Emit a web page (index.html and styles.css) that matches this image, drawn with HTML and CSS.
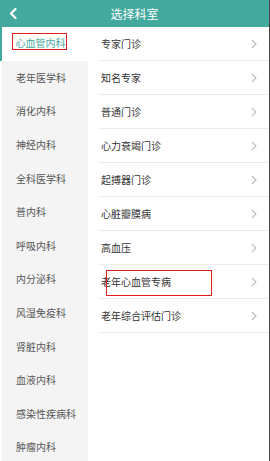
FILE: index.html
```html
<!DOCTYPE html>
<html lang="zh-CN">
<head>
    <meta charset="UTF-8">
    <meta name="viewport" content="width=device-width, initial-scale=1.0">
    <title>选择科室</title>
    <link rel="stylesheet" href="styles.css">
</head>
<body>

<div class="page">
    <header class="topbar">
        <span class="back">
            <svg width="8" height="11" viewBox="0 0 8 11"><path d="M6.5 1 L2 5.5 L6.5 10" fill="none" stroke="#fff" stroke-width="2.2" stroke-linecap="round" stroke-linejoin="round"/></svg>
        </span>
        <h1>选择科室</h1>
    </header>

    <div class="content">
        <ul class="dept-list">
            <li class="dept-item active"><span class="mark">心血管内科</span></li>
            <li class="dept-item">老年医学科</li>
            <li class="dept-item">消化内科</li>
            <li class="dept-item">神经内科</li>
            <li class="dept-item">全科医学科</li>
            <li class="dept-item">普内科</li>
            <li class="dept-item">呼吸内科</li>
            <li class="dept-item">内分泌科</li>
            <li class="dept-item">风湿免疫科</li>
            <li class="dept-item">肾脏内科</li>
            <li class="dept-item">血液内科</li>
            <li class="dept-item">感染性疾病科</li>
            <li class="dept-item">肿瘤内科</li>
        </ul>

        <ul class="clinic-list" id="clinicList">
            <!-- rows are added by the script below -->
        </ul>
    </div>
</div>

<script>
    var clinics = ['专家门诊', '知名专家', '普通门诊', '心力衰竭门诊', '起搏器门诊',
        '心脏瓣膜病', '高血压', '老年心血管专病', '老年综合评估门诊'];

    // Build the clinic rows on the right side
    function displayClinics() {
        var list = document.getElementById('clinicList');
        clinics.forEach(function(name, index) {
            var item = document.createElement('li');
            item.className = 'clinic-item';
            item.innerHTML = '<span>' + name + '</span>' +
                '<svg class="arrow" width="6" height="10" viewBox="0 0 6 10"><path d="M1 1 L5 5 L1 9" fill="none" stroke="#bdbdbd" stroke-width="1.1"/></svg>';
            if (index === 7) {
                item.innerHTML += '<span class="highlight"></span>';
            }
            list.appendChild(item);
        });
    }

    displayClinics();
</script>

</body>
</html>
```

FILE: styles.css
```css
body {
    margin: 0;
    padding: 0;
    background: #fff;
    font-family: "Noto Sans CJK SC", "Noto Sans", sans-serif;
}

.page {
    width: 270px;
    height: 461px;
    box-sizing: border-box;
    border-right: 1px solid #474747;
    overflow: hidden;
}

.topbar {
    height: 27px;
    background-color: #43a89e;
    display: flex;
    align-items: center;
}

.back {
    display: flex;
    width: 10px;
    margin-left: 9px;
}

.topbar h1 {
    flex: 1;
    margin: 0 19px 0 0;
    text-align: center;
    color: #fff;
    font-size: 12px;
    font-weight: normal;
    line-height: 27px;
}

.content {
    display: flex;
}

.dept-list,
.clinic-list {
    list-style: none;
    margin: 0;
    padding: 0;
}

.dept-list {
    width: 88px;
    flex: none;
}

.dept-item {
    height: 33.6px;
    box-sizing: border-box;
    border-left: 2px solid #fff;
    background-color: #f4f4f4;
    padding-left: 14px;
    display: flex;
    align-items: center;
    font-size: 10px;
    color: #555;
}

.dept-item.active {
    border-left-color: #43a89e;
    background-color: #fff;
    color: #43a89e;
}

.mark {
    border: 1.5px solid #e31c1c;
    padding: 3px 0 0 3px;
    margin: 0 0 4px -4.5px;
    line-height: 12px;
}

.clinic-list {
    flex: 1;
    margin-left: 10px;
}

.clinic-item {
    position: relative;
    height: 34px;
    box-sizing: border-box;
    border-bottom: 1px solid #ececec;
    padding: 0 12px 0 3px;
    display: flex;
    align-items: center;
    justify-content: space-between;
    font-size: 10px;
    color: #333;
}

.highlight {
    position: absolute;
    left: 8px;
    top: 5px;
    width: 106px;
    height: 26px;
    box-sizing: border-box;
    border: 1.5px solid #e31c1c;
}
```
